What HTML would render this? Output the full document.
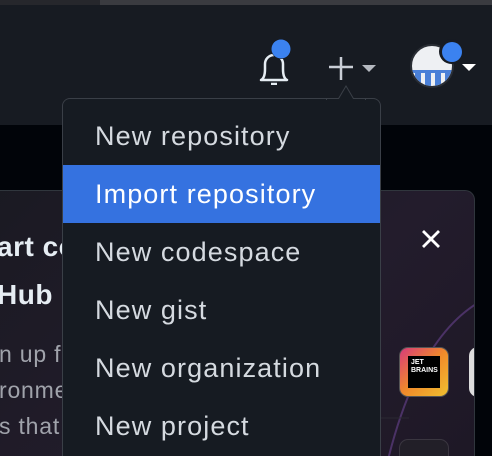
<!DOCTYPE html>
<html style="width:492px;height:456px;overflow:hidden"><head><meta charset="utf-8"><style>
*{margin:0;padding:0;box-sizing:border-box}
body{width:492px;height:456px;overflow:hidden;background:#010409;position:relative;font-family:"Liberation Sans",sans-serif}
.top{position:absolute;left:0;top:0;width:492px;height:5px;background:#3a3b40}
.top:before{content:"";position:absolute;left:0;top:0;width:100px;height:5px;background:#26272c}
.hdr{position:absolute;left:0;top:5px;width:492px;height:120px;background:#171b22}
.card{position:absolute;left:-20px;top:190px;width:495px;height:266px;border-radius:10px 10px 0 0;border:1px solid #30363d;border-bottom:none;overflow:hidden;background:linear-gradient(135deg,#1a1a22,#231c2c 60%,#1e1826)}
.t{position:absolute;color:#e6edf3;font-weight:bold;font-size:28px;letter-spacing:0.5px}
.p{position:absolute;color:#a0a3ab;font-size:23px;letter-spacing:0.8px}
.menu{position:absolute;left:62px;top:98px;width:319px;height:358px;background:#161b22;border:1px solid #3a3f47;border-bottom:none;border-radius:8px 8px 0 0;overflow:hidden}
.it{position:absolute;left:32px;color:#d5dae0;font-size:27px;letter-spacing:1.1px;line-height:58px;height:58px;white-space:nowrap}
.hl{position:absolute;left:0;top:66px;width:317px;height:58px;background:#3572e0}
</style></head><body>
<div class="top"></div>
<div class="hdr"></div>
<svg style="position:absolute;left:250px;top:35px" width="50" height="50" viewBox="0 0 50 50">
<path d="M11 45 Q15 43 15 34 L15 29 A9 9 0 0 1 33 29 L33 34 Q33 43 37 45 Z" fill="none" stroke="#e6edf3" stroke-width="2.5" stroke-linejoin="round"/>
<path d="M21 49 h6" stroke="#e6edf3" stroke-width="2.5"/>
<circle cx="31" cy="14" r="10" fill="#171b22"/><circle cx="31" cy="14" r="9.5" fill="#3b82f0"/>
</svg>
<div class="card">
<svg style="position:absolute;left:0;top:0" width="495" height="266"><path d="M400 300 Q430 150 500 110" fill="none" stroke="#4b3266" stroke-width="2"/><line x1="250" y1="227" x2="428" y2="227" stroke="#2a2832"/></svg>
<div class="t" style="left:16px;top:40px">art co</div>
<div class="t" style="left:16px;top:88px">Hub</div>
<div class="p" style="left:18px;top:150px">n up fu</div>
<div class="p" style="left:18px;top:186px">ronme</div>
<div class="p" style="left:18px;top:222px">s that</div>
<svg style="position:absolute;left:438px;top:36px" width="24" height="24"><path d="M4 4L20 20M20 4L4 20" stroke="#fff" stroke-width="2.8"/></svg>
<div style="position:absolute;left:418px;top:156px;width:50px;height:50px;border-radius:9px;background:linear-gradient(135deg,#d83b7a,#f08a2a 50%,#f0c030);border:1px solid #555"><div style="position:absolute;left:8px;top:8px;width:32px;height:32px;background:#000;color:#fff;font-size:7px;font-weight:bold;padding:3px;line-height:8px">JET<br>BRAINS</div></div>
<div style="position:absolute;left:488px;top:156px;width:20px;height:50px;border-radius:9px;background:#ddd"></div>
<div style="position:absolute;left:418px;top:248px;width:50px;height:50px;border-radius:9px;border:1px solid #3a3640;background:#221f28"></div>
</div>
<svg style="position:absolute;left:325px;top:50px" width="60" height="30"><path d="M16 7v24M4 17h24" stroke="#c9ced6" stroke-width="2.5"/><path d="M37 15h14l-7 7z" fill="#b5b9c0"/></svg>
<div class="menu">
<div class="hl"></div>
<div class="it" style="top:8px">New repository</div>
<div class="it" style="top:66px;color:#fff">Import repository</div>
<div class="it" style="top:124px">New codespace</div>
<div class="it" style="top:182px">New gist</div>
<div class="it" style="top:240px">New organization</div>
<div class="it" style="top:298px">New project</div>
</div>
<svg style="position:absolute;left:326px;top:83px" width="40" height="17"><path d="M0 16.5 L12 16.5 L20 3 L28 16.5 L40 16.5" fill="#161b22" stroke="#3a3f47"/><rect x="1" y="16" width="38" height="2" fill="#161b22"/></svg>
<div style="position:absolute;left:410px;top:44px;width:44px;height:44px;border-radius:50%;background:#eef0f3;overflow:hidden;border:2px solid #2a2e35">
<div style="position:absolute;left:3px;top:24px;width:6px;height:16px;background:#4a80d8"></div>
<div style="position:absolute;left:13px;top:24px;width:6px;height:16px;background:#4a80d8"></div>
<div style="position:absolute;left:23px;top:24px;width:6px;height:16px;background:#4a80d8"></div>
<div style="position:absolute;left:33px;top:24px;width:6px;height:16px;background:#4a80d8"></div>
<div style="position:absolute;left:0;top:24px;width:44px;height:3px;background:#4a80d8"></div>
</div>
<div style="position:absolute;left:439px;top:39px;width:25px;height:25px;border-radius:50%;background:#171b22"></div>
<div style="position:absolute;left:442px;top:42px;width:20px;height:20px;border-radius:50%;background:#3b82f0"></div>
<svg style="position:absolute;left:460px;top:62px" width="18" height="10"><path d="M2 2h14l-7 7z" fill="#fff"/></svg>
</body></html>
